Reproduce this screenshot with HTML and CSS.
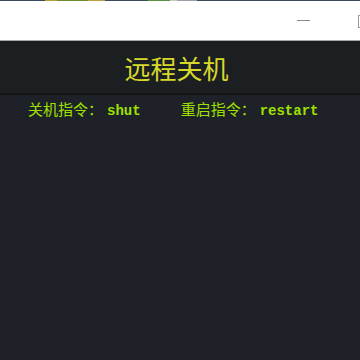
FILE: index.html
```html
<!DOCTYPE html>
<html lang="zh">
<head>
<meta charset="utf-8">
<link rel="stylesheet" href="styles.css">
</head>
<body>
<div class="strip">
  <span class="s1"></span><span class="s2"></span><span class="s3"></span><span class="s4"></span><span class="s5"></span><span class="s6"></span><span class="s7"></span><span class="s8"></span><span class="s9"></span>
</div>
<div class="titlebar">
  <span class="min"></span>
  <span class="max"></span>
</div>
<div class="app">
  <header class="head">远程关机</header>
  <div class="info">
    <span class="cmd">关机指令：<b>shut</b></span>
    <span class="cmd">重启指令：<b>restart</b></span>
  </div>
</div>
</body>
</html>
```
FILE: styles.css
```css
html, body { margin: 0; padding: 0; }
body {
  width: 360px;
  height: 360px;
  overflow: hidden;
  background: #1e2128;
  display: flex;
  flex-direction: column;
}
.strip { height: 1px; display: flex; flex: none; }
.strip span { height: 1px; flex: none; }
.s1 { width: 45px; background: #3b4b5e; }
.s2 { width: 12px; background: #b8a030; }
.s3 { width: 31px; background: #6a8a30; }
.s4 { width: 17px; background: #c0a040; }
.s5 { width: 43px; background: #3b4b5e; }
.s6 { width: 22px; background: #5a9040; }
.s7 { width: 7px; background: #c8c8c8; }
.s8 { width: 20px; background: #9aa0a8; }
.strip .s9 { flex: 1; background: #3b4b5e; }
.titlebar {
  flex: none;
  height: 39px;
  background: #ffffff;
  border-bottom: 1px solid #a8a8a8;
  display: flex;
  align-items: center;
  padding-left: 297px;
  gap: 48px;
  overflow: hidden;
}
.min { flex: none; width: 13px; height: 1px; background: #8a8a8a; }
.max { flex: none; width: 10px; height: 11px; border: 1px solid #9a9a9a; margin-top: 1px; }
.app { flex: 1; display: flex; flex-direction: column; }
.head {
  height: 52px;
  background: #1c1f22;
  border-bottom: 2px solid #141618;
  color: #d8d82a;
  font-family: "Noto Sans CJK SC", sans-serif;
  font-size: 26px;
  display: flex;
  align-items: center;
  justify-content: center;
  padding-right: 7px;
}
.info {
  display: flex;
  gap: 40px;
  padding: 3px 0 0 28px;
  color: #9ee000;
  font-family: "Noto Sans CJK SC", sans-serif;
  font-size: 15px;
}
.cmd b {
  font-family: "Liberation Mono", monospace;
  font-weight: bold;
  font-size: 14px;
  margin-left: 4px;
}
```
